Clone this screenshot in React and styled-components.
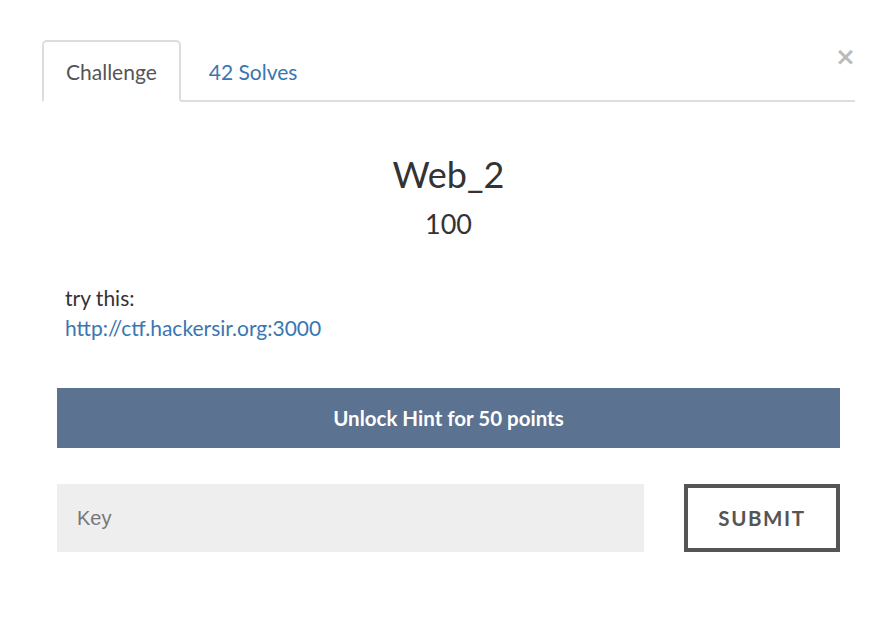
import React from "react";
import styled, { createGlobalStyle } from "styled-components";

const Global = createGlobalStyle`
  body {
    margin: 0;
    background: #fff;
    font-family: Lato, "Open Sans", sans-serif;
    color: #333;
  }
`;

const Modal = styled.div`
  width: 892px;
  height: 632px;
  box-sizing: border-box;
  padding: 40px 37px 0 42px;
`;

const Header = styled.div`
  display: flex;
  align-items: flex-start;
`;

const Tabs = styled.ul`
  flex: 1;
  display: flex;
  list-style: none;
  margin: 0;
  padding: 0;
  border-bottom: 2px solid #ddd;
`;

const Tab = styled.li`
  height: 62px;
  box-sizing: border-box;
  padding: 0 22px;
  margin-bottom: -2px;
  margin-left: ${(p) => (p.$active ? "0" : "4px")};
  display: flex;
  align-items: center;
  font-size: 21px;
  border: 2px solid ${(p) => (p.$active ? "#ddd" : "transparent")};
  border-bottom-color: ${(p) => (p.$active ? "#fff" : "transparent")};
  border-radius: 5px 5px 0 0;
  color: ${(p) => (p.$active ? "#555" : "#3a76b0")};
`;

const Close = styled.div`
  width: 20px;
  margin-top: 8px;
  margin-left: -20px;
  color: #bbb;
  font-size: 25px;
  font-weight: 700;
  line-height: 18px;
  font-family: "DejaVu Sans", sans-serif;
`;

const Body = styled.div`
  padding: 0 15px;
`;

const Title = styled.h2`
  margin: 50px 0 0;
  text-align: center;
  font-weight: 400;
  font-size: 36px;
  line-height: 44px;
  color: #333;
`;

const Points = styled.div`
  text-align: center;
  font-size: 27px;
  line-height: 36px;
  margin-top: 10px;
`;

const Description = styled.div`
  margin-top: 41px;
  padding-left: 8px;
  font-size: 21px;
  line-height: 30px;
`;

const Link = styled.a`
  color: #3a76b0;
  text-decoration: none;
`;

const HintButton = styled.button`
  display: block;
  width: 100%;
  height: 60px;
  margin-top: 45px;
  border: none;
  background: #5b7290;
  color: #fff;
  font-family: Lato, sans-serif;
  font-weight: 700;
  font-size: 20.5px;
`;

const SubmitRow = styled.div`
  display: flex;
  gap: 40px;
  margin-top: 36px;
`;

const KeyInput = styled.input`
  flex: 1;
  height: 68px;
  box-sizing: border-box;
  border: none;
  background: #eee;
  padding: 0 20px;
  font-family: "Liberation Sans", Arial, sans-serif;
  font-size: 20px;
  color: #555;
  outline: none;
  &::placeholder {
    color: #777;
  }
`;

const SubmitButton = styled.button`
  width: 156px;
  height: 68px;
  box-sizing: border-box;
  border: 4px solid #555;
  background: #fff;
  color: #555;
  font-family: Lato, sans-serif;
  font-weight: 700;
  font-size: 20.5px;
  letter-spacing: 1.6px;
`;

export default function App() {
  return (
    <>
      <Global />
      <Modal>
        <Header>
          <Tabs>
            <Tab $active>Challenge</Tab>
            <Tab>42 Solves</Tab>
          </Tabs>
          <Close>×</Close>
        </Header>
        <Body>
          <Title>Web_2</Title>
          <Points>100</Points>
          <Description>
            try this:
            <br />
            <Link href="#">http://ctf.hackersir.org:3000</Link>
          </Description>
          <HintButton>Unlock Hint for 50 points</HintButton>
          <SubmitRow>
            <KeyInput placeholder="Key" />
            <SubmitButton>SUBMIT</SubmitButton>
          </SubmitRow>
        </Body>
      </Modal>
    </>
  );
}
